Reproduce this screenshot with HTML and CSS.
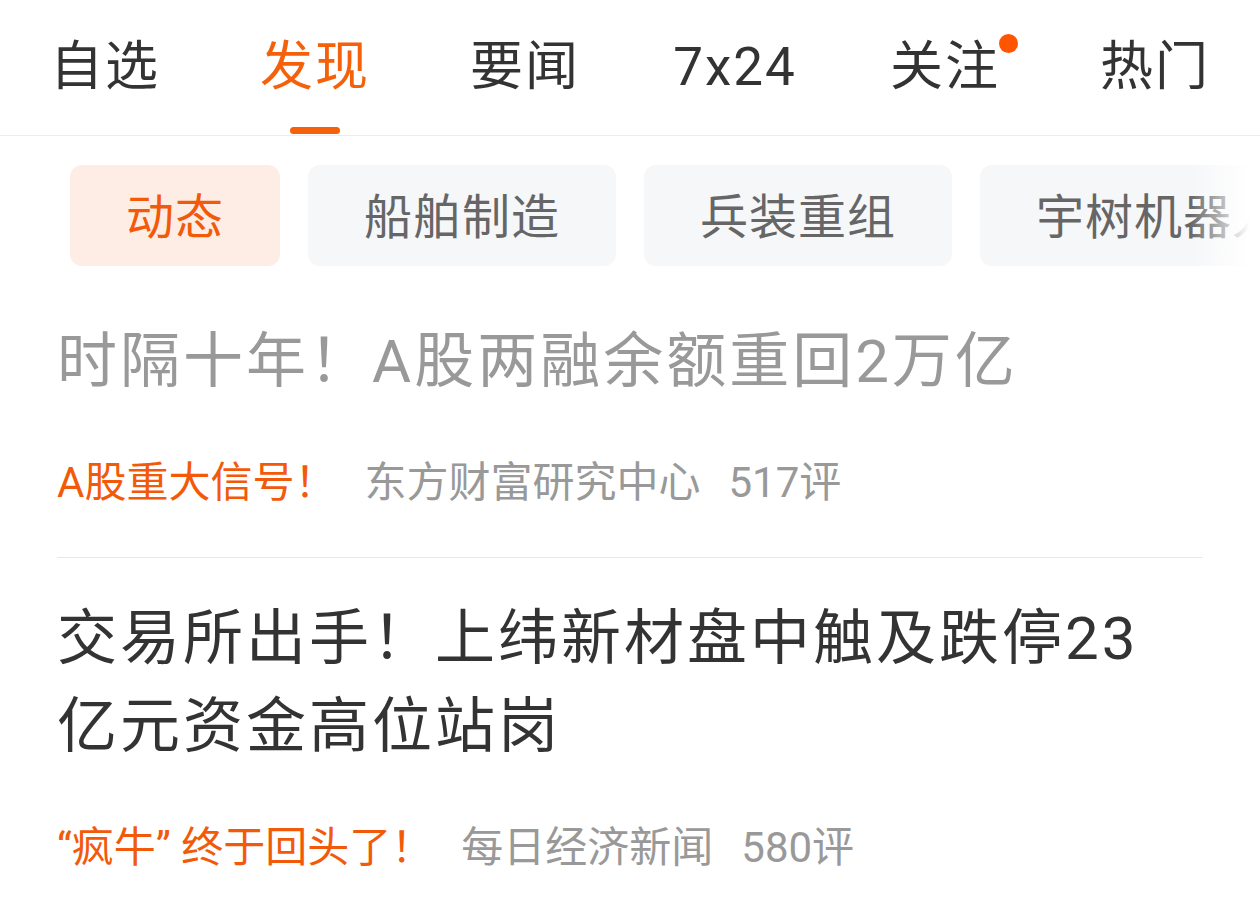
FILE: index.html
```html
<!DOCTYPE html>
<html lang="zh-CN">

<head>
	<meta charset="UTF-8">
	<title>发现</title>
	<link rel="stylesheet" href="styles.css">
</head>

<body>
	<nav class="tabBar">
		<a class="tab">自选</a>
		<a class="tab active">发现</a>
		<a class="tab">要闻</a>
		<a class="tab">7x24</a>
		<a class="tab dot">关注</a>
		<a class="tab">热门</a>
	</nav>

	<div class="chipRow">
		<span class="chip active">动态</span>
		<span class="chip">船舶制造</span>
		<span class="chip">兵装重组</span>
		<span class="chip">宇树机器人</span>
		<span class="chip">低空经济</span>
	</div>

	<div class="feed">
		<div class="article read">
			<h2 class="title">时隔十年！A股两融余额重回2万亿</h2>
			<div class="meta">
				<span class="tag">A股重大信号！</span>
				<span class="source">东方财富研究中心</span>
				<span class="comments">517评</span>
			</div>
		</div>
		<div class="article">
			<h2 class="title">交易所出手！上纬新材盘中触及跌停23亿元资金高位站岗</h2>
			<div class="meta">
				<span class="tag">“疯牛” 终于回头了！</span>
				<span class="source">每日经济新闻</span>
				<span class="comments">580评</span>
			</div>
		</div>
	</div>
</body>

</html>
```

FILE: styles.css
```css
body {
    font-family: Roboto, "Noto Sans CJK SC", sans-serif;
    background-color: #fff;
    color: #333;
    margin: 0;
    width: 1260px;
    overflow: hidden;
}
.tabBar {
    display: flex;
    height: 135px;
    border-bottom: 1px solid #ececec;
}
.tab {
    flex: 1;
    display: flex;
    justify-content: center;
    padding-top: 33px;
    font-size: 53px;
    line-height: 68px;
    letter-spacing: 2px;
    color: #333;
    position: relative;
}
.tab.active {
    color: #f5600a;
}
.tab.active::after {
    content: "";
    position: absolute;
    bottom: 1px;
    left: 50%;
    margin-left: -25px;
    width: 50px;
    height: 7px;
    border-radius: 4px;
    background-color: #f5600a;
}
.tab.dot::after {
    content: "";
    position: absolute;
    top: 34px;
    left: 159px;
    width: 19px;
    height: 19px;
    border-radius: 50%;
    background-color: #ff5500;
}
.chipRow {
    display: flex;
    gap: 28px;
    padding: 29px 0 0 70px;
    position: relative;
    white-space: nowrap;
}
.chipRow::after {
    content: "";
    position: absolute;
    top: 0;
    right: 0;
    bottom: 0;
    width: 70px;
    background: linear-gradient(to right, rgba(255,255,255,0), #fff 85%);
}
.chip {
    flex-shrink: 0;
    height: 101px;
    line-height: 105px;
    padding: 0 56px;
    border-radius: 12px;
    background-color: #f6f7f9;
    color: #666;
    font-size: 48px;
    letter-spacing: 1px;
}
.chip.active {
    background-color: #feede5;
    color: #f25a0a;
}
.feed {
    padding: 0 57px;
}
.article {
    padding: 37px 0 44px;
    border-bottom: 1px solid #e8e8e8;
}
.article:first-child {
    padding-top: 52px;
}
.title {
    max-width: 1100px;
    margin: 0 0 47px;
    font-size: 60px;
    font-weight: normal;
    line-height: 88px;
    letter-spacing: 3px;
    color: #333;
}
.read .title {
    color: #999;
}
.meta {
    display: flex;
    align-items: center;
    font-size: 42px;
    line-height: 60px;
    color: #999;
}
.tag {
    color: #f25a0a;
    margin-right: 28px;
}
.source {
    margin-right: 28px;
}
```
